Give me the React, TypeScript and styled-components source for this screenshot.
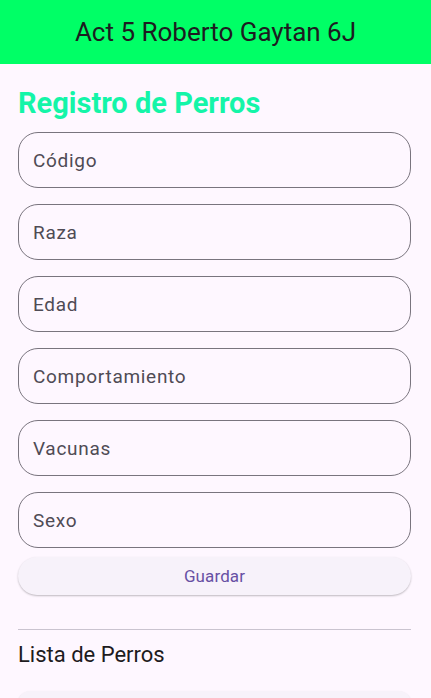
import React from 'react';
import styled, { createGlobalStyle } from 'styled-components';

const GlobalStyle = createGlobalStyle`
  html, body {
    margin: 0;
    padding: 0;
    background: #fef7ff;
    font-family: Roboto, "Liberation Sans", sans-serif;
  }
`;

const Page = styled.div`
  width: 431px;
  height: 698px;
  overflow: hidden;
  background: #fef7ff;
`;

const AppBar = styled.header`
  height: 64px;
  background: #00ff66;
  display: flex;
  align-items: center;
  justify-content: center;
`;

const AppTitle = styled.h1`
  margin: 0;
  font-size: 26px;
  font-weight: 400;
  color: #1d1b20;
`;

const Body = styled.main`
  padding: 20px 20px 0 18px;
  display: flex;
  flex-direction: column;
`;

const Heading = styled.h2`
  margin: 0 0 10px;
  font-size: 29px;
  line-height: 38px;
  font-weight: 700;
  color: #14f5a8;
`;

const Fields = styled.div`
  display: flex;
  flex-direction: column;
  gap: 16px;
`;

const Field = styled.label`
  height: 56px;
  box-sizing: border-box;
  border: 1px solid #79747e;
  border-radius: 20px;
  display: flex;
  align-items: center;
  padding: 0 14px;
`;

const FieldLabel = styled.span`
  font-size: 19px;
  letter-spacing: 0.7px;
  color: #4f4b55;
`;

const SaveButton = styled.button`
  margin-top: 9px;
  height: 38px;
  border: none;
  border-radius: 19px;
  background: #f7f2fa;
  box-shadow: 0 1px 2px rgba(0, 0, 0, 0.25);
  color: #6750a4;
  font-family: inherit;
  font-size: 17px;
  font-weight: 400;
  letter-spacing: 0.1px;
`;

const Divider = styled.hr`
  margin: 34px 0 0;
  border: none;
  border-top: 1px solid #cac4d0;
`;

const ListTitle = styled.h3`
  margin: 0;
  padding: 11px 0 10px;
  font-size: 22px;
  line-height: 28px;
  font-weight: 400;
  color: #1d1b20;
`;

const Card = styled.div`
  margin-top: 12px;
  height: 80px;
  border-radius: 12px;
  background: #f7f2fa;
  box-shadow: 0 1px 2px rgba(0, 0, 0, 0.15);
`;

const fields = ['Código', 'Raza', 'Edad', 'Comportamiento', 'Vacunas', 'Sexo'];

const App: React.FC = () => {
  return (
    <Page>
      <GlobalStyle />
      <AppBar>
        <AppTitle>Act 5 Roberto Gaytan 6J</AppTitle>
      </AppBar>
      <Body>
        <Heading>Registro de Perros</Heading>
        <Fields>
          {fields.map((f) => (
            <Field key={f}>
              <FieldLabel>{f}</FieldLabel>
            </Field>
          ))}
        </Fields>
        <SaveButton>Guardar</SaveButton>
        <Divider />
        <ListTitle>Lista de Perros</ListTitle>
        <Card />
      </Body>
    </Page>
  );
};

export default App;
